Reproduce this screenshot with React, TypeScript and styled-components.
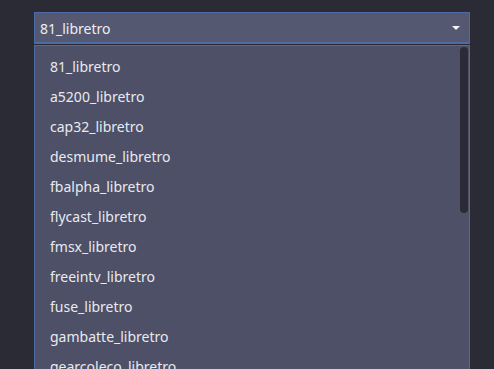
import React, { FunctionComponent } from 'react';
import styled, { createGlobalStyle } from 'styled-components';

const GlobalStyle = createGlobalStyle`
  html, body {
    margin: 0;
    padding: 0;
    background: #2b2b35;
    overflow: hidden;
    height: 100%;
  }
  body {
    font-family: 'Noto Sans', 'Open Sans', sans-serif;
  }
`;

const StyledPage = styled.div`
  padding: 12px 24px 0 34px;
  height: 369px;
  box-sizing: border-box;
`;

const StyledSelect = styled.div`
  display: flex;
  align-items: center;
  justify-content: space-between;
  height: 32px;
  box-sizing: border-box;
  border: 1px solid #4a6ba6;
  border-bottom-width: 2px;
  background: #545870;
  color: #eceef4;
  font-size: 14px;
  padding: 1px 9px 0 5px;
`;

const StyledArrow = styled.span`
  width: 0;
  height: 0;
  border-left: 4px solid transparent;
  border-right: 4px solid transparent;
  border-top: 4px solid #f4f4f8;
`;

const StyledDropdown = styled.div`
  position: relative;
  margin-top: 1px;
  height: 340px;
  box-sizing: border-box;
  border: 1px solid #4a6ba6;
  background: #4d5066;
  padding-top: 5px;
  overflow: hidden;
`;

const StyledItem = styled.div`
  height: 30px;
  display: flex;
  align-items: center;
  padding-left: 15px;
  color: #e8eaf0;
  font-size: 14px;
`;

const StyledThumb = styled.div`
  position: absolute;
  top: 1px;
  right: 1px;
  width: 8px;
  height: 166px;
  border-radius: 4px;
  background: #2b2b35;
`;

const CORES = [
  '81_libretro',
  'a5200_libretro',
  'cap32_libretro',
  'desmume_libretro',
  'fbalpha_libretro',
  'flycast_libretro',
  'fmsx_libretro',
  'freeintv_libretro',
  'fuse_libretro',
  'gambatte_libretro',
  'gearcoleco_libretro',
  'genesis_plus_gx_libretro',
];

const App: FunctionComponent = () => {
  return (
    <>
      <GlobalStyle />
      <StyledPage>
        <StyledSelect>
          <span>81_libretro</span>
          <StyledArrow />
        </StyledSelect>
        <StyledDropdown>
          {CORES.map((core) => (
            <StyledItem key={core}>{core}</StyledItem>
          ))}
          <StyledThumb />
        </StyledDropdown>
      </StyledPage>
    </>
  );
};

export default App;
